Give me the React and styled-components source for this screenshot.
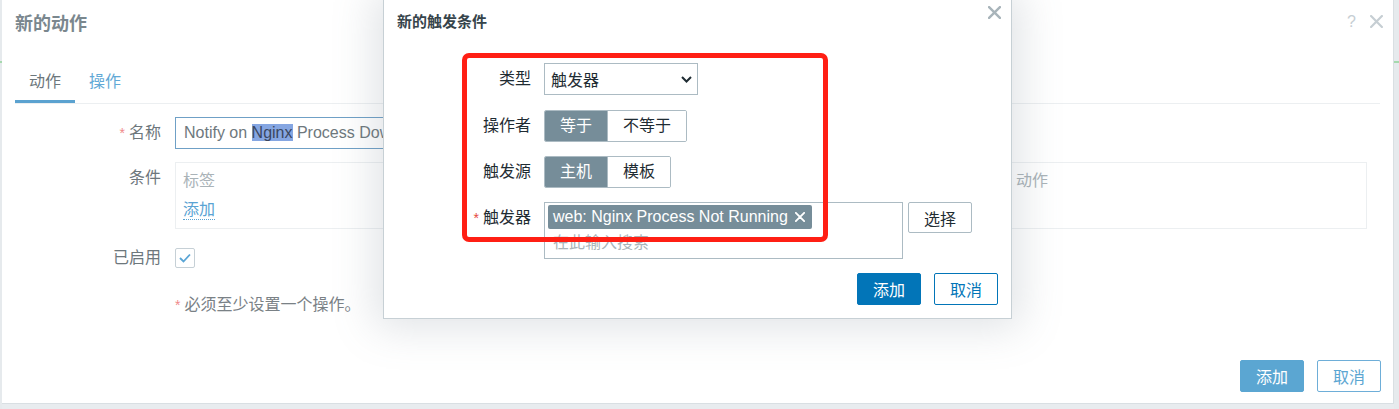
import React from 'react';
import styled, { createGlobalStyle } from 'styled-components';

const GlobalStyle = createGlobalStyle`
  body {
    margin: 0;
    background: #e8ecef;
    font-family: "Liberation Sans", "Noto Sans CJK SC", sans-serif;
  }
`;

const Page = styled.div`
  position: relative;
  display: flex;
  width: 1399px;
  height: 409px;
  overflow: hidden;
  background: #e8ecef;
`;

const Rail = styled.div`
  position: relative;
  width: ${props => props.w}px;
  flex-shrink: 0;
  background: #e6eaed;

  &::before {
    content: '';
    position: absolute;
    left: 0;
    right: 0;
    top: 61px;
    height: 2px;
    background: #a6d9ae;
  }
`;

const Sheet = styled.div`
  width: 1392px;
  height: 404px;
  flex-shrink: 0;
  box-sizing: border-box;
  background: #fff;
  border-right: 1px solid #d9dfe3;
  border-bottom: 1px solid #d9dfe3;
  display: flex;
  flex-direction: column;
`;

const SheetHeader = styled.div`
  display: flex;
  align-items: center;
  justify-content: space-between;
  height: 43px;
  padding: 0 10px 0 13px;
`;

const SheetTitle = styled.h2`
  margin: 0;
  font-size: 18px;
  font-weight: bold;
  color: #7a878e;
`;

const HeaderTools = styled.div`
  display: flex;
  align-items: center;
  gap: 14px;
  color: #c6ced3;
  font-size: 16px;
`;

const Tabs = styled.div`
  display: flex;
  margin: 20px 13px 0 13px;
  border-bottom: 1px solid #eceff1;
`;

const Tab = styled.div`
  height: 37px;
  line-height: 37px;
  padding: 0 14px;
  font-size: 16px;
  color: ${props => (props.active ? '#6d777c' : '#62a9d6')};
  border-bottom: 3px solid ${props => (props.active ? '#5ba2d0' : 'transparent')};
`;

const Form = styled.div`
  padding: 13px 26px 0 0;
`;

const FormRow = styled.div`
  display: grid;
  grid-template-columns: ${props => props.labelWidth}px 1fr;
  column-gap: ${props => props.gap}px;
  align-items: ${props => props.align || 'start'};
  margin-top: ${props => props.mt || 0}px;
`;

const Label = styled.div`
  text-align: right;
  font-size: 16px;
  line-height: ${props => props.lh || 32}px;
  color: ${props => props.color || '#6d777c'};
  white-space: nowrap;
`;

const Req = styled.span`
  color: ${props => props.color || '#f08a8a'};
  font-size: 14px;
  margin-right: 4px;
`;

const NameInput = styled.div`
  width: 470px;
  height: 32px;
  box-sizing: border-box;
  border: 1px solid #6fa0c6;
  padding: 0 8px;
  font-size: 16px;
  line-height: 30px;
  color: #6e787d;
  white-space: nowrap;
  overflow: hidden;
`;

const Selected = styled.span`
  background: #85a6e2;
  color: #3a4660;
`;

const CondBox = styled.div`
  border: 1px solid #eceff1;
  padding: 8px 8px 8px 7px;
`;

const CondHead = styled.div`
  display: grid;
  grid-template-columns: 260px 1fr 342px;
  font-size: 16px;
  line-height: 20px;
  color: #aab3b8;
`;

const LinkText = styled.span`
  display: inline-block;
  margin-top: 9px;
  font-size: 16px;
  line-height: 19px;
  color: #5aa3d3;
  border-bottom: 1px dotted #5aa3d3;
`;

const Check = styled.div`
  width: 20px;
  height: 20px;
  box-sizing: border-box;
  border: 1px solid #c6d0d6;
  border-radius: 2px;
  display: flex;
  align-items: center;
  justify-content: center;
`;

const Note = styled.div`
  font-size: 16px;
  line-height: 20px;
  color: #7a8186;
`;

const Footer = styled.div`
  display: flex;
  justify-content: flex-end;
  gap: 13px;
  margin-top: ${props => (props.auto ? 'auto' : `${props.mt}px`)};
  padding: 0 ${props => props.pr}px ${props => props.pb}px 0;
`;

const Button = styled.button`
  width: 64px;
  height: ${props => props.h || 32}px;
  box-sizing: border-box;
  padding: 0;
  border-radius: 2px;
  font-family: inherit;
  font-size: 16px;
  border: 1px solid ${props => props.border};
  background: ${props => props.bg || '#fff'};
  color: ${props => props.color};
`;

const Dialog = styled.div`
  position: absolute;
  left: 383px;
  top: -1px;
  width: 629px;
  height: 320px;
  box-sizing: border-box;
  background: #fff;
  border: 1px solid #c7d0d5;
  box-shadow: 0 0 40px 8px rgba(110, 125, 135, 0.22);
  display: flex;
  flex-direction: column;
`;

const DialogTitle = styled.h3`
  margin: 0;
  height: 44px;
  line-height: 44px;
  padding-left: 13px;
  font-size: 15px;
  font-weight: bold;
  color: #36444b;
`;

const CloseBtn = styled.div`
  position: absolute;
  top: 5px;
  right: 10px;
  width: 13px;
  height: 13px;
`;

const DialogBody = styled.div`
  padding-top: 19px;
`;

const Select = styled.div`
  width: 154px;
  height: 32px;
  box-sizing: border-box;
  border: 1px solid #acbbc3;
  padding: 0 5px 0 6px;
  display: flex;
  align-items: center;
  justify-content: space-between;
  font-size: 16px;
  color: #1f2c33;
`;

const Segmented = styled.div`
  display: inline-flex;
  justify-self: start;
  border: 1px solid #acbbc3;
  border-radius: 2px;
  overflow: hidden;
`;

const Segment = styled.div`
  padding: 0 15px;
  line-height: 30px;
  font-size: 16px;
  background: ${props => (props.on ? '#768d99' : '#fff')};
  color: ${props => (props.on ? '#fff' : '#1f2c33')};
  & + & {
    border-left: 1px solid #acbbc3;
  }
`;

const PickerLine = styled.div`
  display: flex;
  align-items: flex-start;
  gap: 5px;
`;

const Multi = styled.div`
  width: 359px;
  height: 57px;
  box-sizing: border-box;
  border: 1px solid #acbbc3;
  padding: 2px 3px;
`;

const Chip = styled.div`
  display: inline-flex;
  align-items: center;
  gap: 7px;
  height: 24px;
  padding: 0 7px 0 5px;
  border-radius: 2px;
  background: #768d99;
  color: #fff;
  font-size: 16px;
`;

const Placeholder = styled.div`
  margin: 4px 0 0 5px;
  font-size: 16px;
  line-height: 20px;
  color: #a9b4b9;
`;

const Marker = styled.div`
  position: absolute;
  left: 78px;
  top: 53px;
  width: 366px;
  height: 189px;
  box-sizing: border-box;
  border: 5px solid #ff1f14;
  border-radius: 7px;
  pointer-events: none;
`;

const Cross = ({ size, color, w }) => (
  <svg width={size} height={size} viewBox="0 0 12 12">
    <path d="M1 1L11 11M11 1L1 11" stroke={color} strokeWidth={w} strokeLinecap="round" />
  </svg>
);

export default function App() {
  return (
    <Page>
      <GlobalStyle />
      <Rail w={2} />
      <Sheet>
        <SheetHeader>
          <SheetTitle>新的动作</SheetTitle>
          <HeaderTools>
            <span>?</span>
            <Cross size={13} color="#c6ced3" w={2} />
          </HeaderTools>
        </SheetHeader>
        <Tabs>
          <Tab active>动作</Tab>
          <Tab>操作</Tab>
        </Tabs>
        <Form>
          <FormRow labelWidth={159} gap={14}>
            <Label><Req>*</Req>名称</Label>
            <NameInput>
              Notify on <Selected>Nginx</Selected> Process Down
            </NameInput>
          </FormRow>
          <FormRow labelWidth={159} gap={14} mt={13}>
            <Label>条件</Label>
            <CondBox>
              <CondHead>
                <span>标签</span>
                <span>名称</span>
                <span>动作</span>
              </CondHead>
              <LinkText>添加</LinkText>
            </CondBox>
          </FormRow>
          <FormRow labelWidth={159} gap={14} mt={18} align="center">
            <Label lh={22}>已启用</Label>
            <Check>
              <svg width="12" height="10" viewBox="0 0 12 10">
                <path d="M1 5L4.5 8.5L11 1.5" fill="none" stroke="#5aa5d5" strokeWidth="1.8" />
              </svg>
            </Check>
          </FormRow>
          <FormRow labelWidth={159} gap={14} mt={26}>
            <span />
            <Note><Req>*</Req>必须至少设置一个操作。</Note>
          </FormRow>
        </Form>
        <Footer auto pr={12} pb={11}>
          <Button bg="#5ba6d2" border="#5ba6d2" color="#fff">添加</Button>
          <Button border="#6eaed8" color="#5ba6d2">取消</Button>
        </Footer>
      </Sheet>
      <Rail w={5} />

      <Dialog>
        <DialogTitle>新的触发条件</DialogTitle>
        <CloseBtn>
          <Cross size={13} color="#a8b4ba" w={2.2} />
        </CloseBtn>
        <DialogBody>
          <FormRow labelWidth={147} gap={13}>
            <Label color="#1f2c33">类型</Label>
            <Select>
              <span>触发器</span>
              <svg width="11" height="7" viewBox="0 0 11 7">
                <path d="M1 1L5.5 5.5L10 1" fill="none" stroke="#1f2c33" strokeWidth="2" />
              </svg>
            </Select>
          </FormRow>
          <FormRow labelWidth={147} gap={13} mt={15}>
            <Label color="#1f2c33">操作者</Label>
            <Segmented>
              <Segment on>等于</Segment>
              <Segment>不等于</Segment>
            </Segmented>
          </FormRow>
          <FormRow labelWidth={147} gap={13} mt={14}>
            <Label color="#1f2c33">触发源</Label>
            <Segmented>
              <Segment on>主机</Segment>
              <Segment>模板</Segment>
            </Segmented>
          </FormRow>
          <FormRow labelWidth={147} gap={13} mt={14}>
            <Label color="#1f2c33"><Req color="#e5483d">*</Req>触发器</Label>
            <PickerLine>
              <Multi>
                <Chip>
                  web: Nginx Process Not Running
                  <Cross size={10} color="#fff" w={2.2} />
                </Chip>
                <Placeholder>在此输入搜索</Placeholder>
              </Multi>
              <Button h={31} border="#acbbc3" color="#1f2c33">选择</Button>
            </PickerLine>
          </FormRow>
        </DialogBody>
        <Footer mt={14} pr={13} pb={0}>
          <Button bg="#0275b8" border="#0275b8" color="#fff">添加</Button>
          <Button border="#0275b8" color="#0275b8">取消</Button>
        </Footer>
        <Marker />
      </Dialog>
    </Page>
  );
}
